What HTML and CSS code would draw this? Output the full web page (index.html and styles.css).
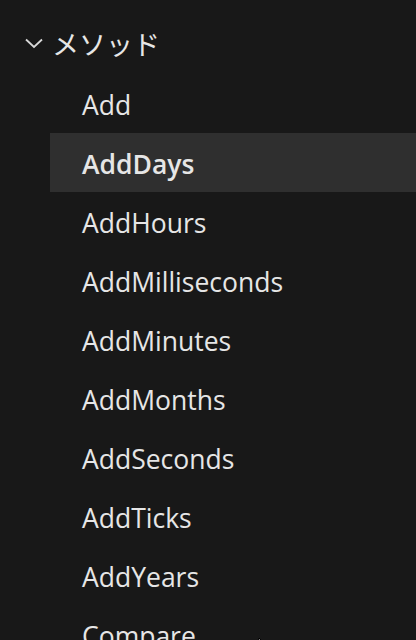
FILE: index.html
```html
<!DOCTYPE html>
<html>
<head>
    <title>メソッド</title>
    <link rel="stylesheet" href="styles.css">
</head>
<body>
<div class="tree">
    <div class="group-header">
        <svg class="chevron" width="18" height="11" viewBox="0 0 18 11">
            <path d="M1 1.5 L9 9 L17 1.5" fill="none" stroke="#d8d8d8" stroke-width="1.8"/>
        </svg>
        <span class="group-title">メソッド</span>
    </div>
    <ul class="items">
        <li class="item">Add</li>
        <li class="item selected">AddDays</li>
        <li class="item">AddHours</li>
        <li class="item">AddMilliseconds</li>
        <li class="item">AddMinutes</li>
        <li class="item">AddMonths</li>
        <li class="item">AddSeconds</li>
        <li class="item">AddTicks</li>
        <li class="item">AddYears</li>
        <li class="item">Compare</li>
    </ul>
</div>
<svg class="cursor" width="12" height="16" viewBox="0 0 12 16">
    <path d="M1 1 L1 14 L4 11 L7 16 L9 15 L6 10 L10 10 Z" fill="#ffffff" stroke="#000000" stroke-width="1"/>
</svg>
</body>
</html>
```
FILE: styles.css
```css
html, body {
    margin: 0;
    padding: 0;
    background-color: #181818;
    height: 100%;
    overflow: hidden;
}

body {
    position: relative;
}

.tree {
    font-family: "Open Sans", "Noto Sans CJK JP", sans-serif;
    color: #e6e6e6;
    padding-top: 15px;
}

.group-header {
    display: flex;
    align-items: center;
    height: 59px;
    padding-left: 25px;
}

.chevron {
    margin-right: 9px;
    margin-top: -2px;
}

.group-title {
    font-size: 27px;
    font-family: "Noto Sans CJK JP", sans-serif;
    line-height: 1;
    margin-top: -2px;
}

.items {
    list-style: none;
    margin: 0;
    padding: 0 0 0 50px;
}

.item {
    box-sizing: border-box;
    height: 59px;
    padding-top: 4px;
    line-height: 55px;
    padding-left: 32px;
    font-size: 26.5px;
}

.selected {
    background-color: #2f2f2f;
    font-weight: 600;
}

.cursor {
    position: absolute;
    left: 258px;
    top: 637px;
}
```
